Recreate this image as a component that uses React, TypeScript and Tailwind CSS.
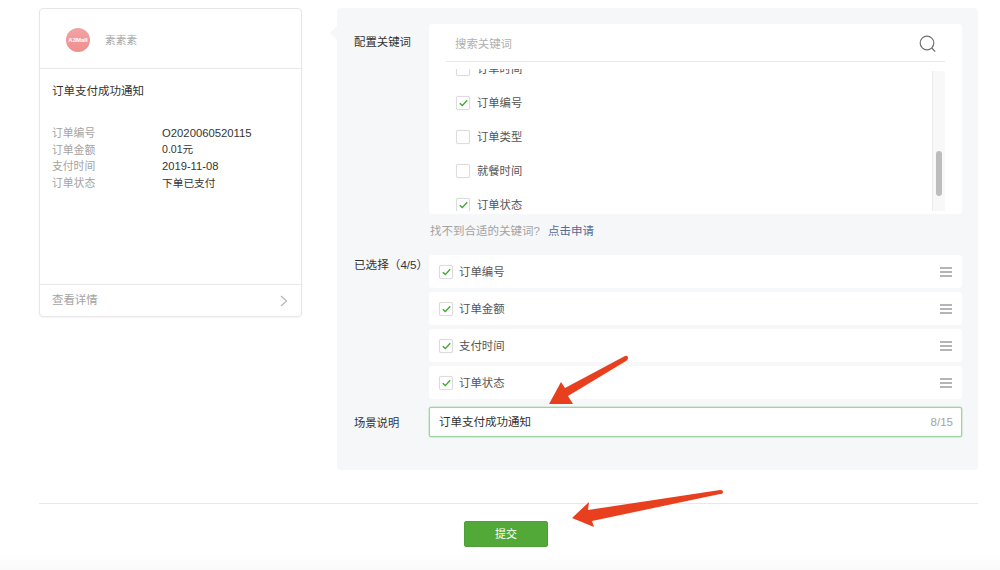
const FONT = "font-['Liberation_Sans','Noto_Sans_CJK_SC',sans-serif]"

const details = [
  { label: '订单编号', value: 'O2020060520115', size: 'text-[11.3px]' },
  { label: '订单金额', value: '0.01元', size: 'text-[10.6px]' },
  { label: '支付时间', value: '2019-11-08', size: 'text-[11.2px]' },
  { label: '订单状态', value: '下单已支付', size: 'text-[10.7px]' },
]

const keywords = [
  { name: '订单时间', checked: false },
  { name: '订单编号', checked: true },
  { name: '订单类型', checked: false },
  { name: '就餐时间', checked: false },
  { name: '订单状态', checked: true },
]

const selected = ['订单编号', '订单金额', '支付时间', '订单状态']

function Checkbox({ checked }: { checked: boolean }) {
  return (
    <span className="flex h-[14px] w-[14px] shrink-0 items-center justify-center rounded-[2px] border border-[#dcdcdc] bg-white shadow-[0_0_1px_rgba(0,0,0,0.12)]">
      {checked && (
        <svg width="9" height="8" viewBox="0 0 9 8" fill="none">
          <path d="M0.8 4.2 L3.3 6.6 L8.2 1.2" stroke="#3fa62f" strokeWidth="1.4" />
        </svg>
      )}
    </span>
  )
}

function PreviewCard() {
  return (
    <div className="flex h-[309px] w-[263px] shrink-0 flex-col rounded-[4px] border border-[#e6e6e6] bg-white shadow-[0_1px_2px_rgba(0,0,0,0.04)]">
      <div className="flex h-[60px] items-center border-b border-[#e8e8e8] pl-[26px] pt-[3px]">
        <div className="flex h-[24px] w-[24px] items-center justify-center overflow-hidden rounded-full bg-gradient-to-b from-[#f2a3a3] to-[#ee8f8f] text-[6px] font-bold text-white">
          A3Mall
        </div>
        <span className="ml-[15px] text-[10.7px] text-[#a8a8a8]">素素素</span>
      </div>
      <div className="flex-1 px-[12px]">
        <div className="mt-[14px] text-[11.5px] leading-[17px] text-[#333333]">订单支付成功通知</div>
        <div className="mt-[25px]">
          {details.map((d) => (
            <div key={d.label} className="flex h-[16.5px] items-center text-[10.8px]">
              <span className="w-[110px] text-[#a3a3a3]">{d.label}</span>
              <span className={`${d.size} text-[#353535]`}>{d.value}</span>
            </div>
          ))}
        </div>
      </div>
      <div className="flex h-[32px] items-center justify-between border-t border-[#e8e8e8] pl-[12px] pr-[13px] text-[11.4px] text-[#a3a3a3]">
        <span>查看详情</span>
        <svg width="8" height="12" viewBox="0 0 8 12" fill="none">
          <path d="M1 1 L6.5 6 L1 11" stroke="#b5b5b5" strokeWidth="1.2" />
        </svg>
      </div>
    </div>
  )
}

function KeywordBox() {
  return (
    <div className="h-[190px] w-[533px] rounded-[3px] bg-white px-[17px] pt-[1px]">
      <div className="flex h-[37px] items-center justify-between border-b border-[#e8e8e8] pl-[9px] pr-[8px]">
        <span className="pt-[4px] text-[11.4px] text-[#b0b0b0]">搜索关键词</span>
        <svg width="18" height="18" viewBox="0 0 18 18" fill="none" className="mt-[2px]">
          <circle cx="8" cy="8" r="6.8" stroke="#707070" strokeWidth="1.2" />
          <path d="M12.8 13 L16.2 16.6" stroke="#707070" strokeWidth="1.3" />
        </svg>
      </div>
      <div className="relative mt-[7px] h-[142px] overflow-hidden">
        <div className="-mt-[17px] pl-[10px]">
          {keywords.map((k) => (
            <div key={k.name} className="flex h-[34px] items-center gap-[7px] text-[11.3px] text-[#555555]">
              <Checkbox checked={k.checked} />
              <span>{k.name}</span>
            </div>
          ))}
        </div>
        <div className="absolute right-0 top-[2px] h-[140px] w-[13px] border-l border-[#ececec] bg-[#f8f8f8]">
          <div className="ml-[3px] mt-[80px] h-[45px] w-[6px] rounded-[3px] bg-[#bdbdbd]" />
        </div>
      </div>
    </div>
  )
}

export default function App() {
  return (
    <div className={`relative h-[570px] w-[1000px] overflow-hidden bg-white ${FONT}`}>
      <div className="flex h-[503px] items-start gap-[35px] pl-[39px] pt-[8px]">
        <PreviewCard />

        <div className="relative h-[462px] w-[641px] rounded-[4px] bg-[#f6f7f9] pl-[17px] pt-[16px]">
          <div className="absolute -left-[5px] top-[20px] h-[10px] w-[10px] rotate-45 bg-[#f6f7f9]" />

          <div className="flex">
            <div className="w-[75px] pt-[10px] text-[11.4px] leading-[16px] text-[#333333]">配置关键词</div>
            <KeywordBox />
          </div>

          <div className="ml-[76px] mt-[9px] h-[16px] text-[11.5px] leading-[17px] text-[#a3a3a3]">
            找不到合适的关键词?
            <span className="ml-[8px] text-[#576b95]">点击申请</span>
          </div>

          <div className="mt-[16px] flex">
            <div className="w-[75px] pt-[2px] text-[11.6px] leading-[16px] text-[#333333]">已选择（4/5）</div>
            <div className="flex flex-col gap-[4px]">
              {selected.map((s) => (
                <div key={s} className="flex h-[33px] w-[533px] items-center rounded-[3px] bg-white pl-[10px] pr-[10px] text-[11.4px] text-[#555555]">
                  <Checkbox checked />
                  <span className="ml-[6px] flex-1 pt-[2px]">{s}</span>
                  <span className="flex w-[12px] flex-col gap-[2px]">
                    <span className="h-[2px] bg-[#b5b5b5]" />
                    <span className="h-[2px] bg-[#b5b5b5]" />
                    <span className="h-[2px] bg-[#b5b5b5]" />
                  </span>
                </div>
              ))}
            </div>
          </div>

          <div className="mt-[8px] flex items-center">
            <div className="w-[75px] pt-[2px] text-[11.3px] text-[#333333]">场景说明</div>
            <div className="flex h-[30px] w-[533px] items-center justify-between rounded-[2px] border border-[#9ad6a2] bg-white pl-[9px] pr-[8px] shadow-[0_0_0_0.5px_#b5e2ba]">
              <span className="pt-[2px] text-[11.5px] text-[#333333]">订单支付成功通知</span>
              <span className="pt-[1px] text-[11.5px] text-[#a3a3a3]">8/15</span>
            </div>
          </div>
        </div>
      </div>

      <div className="ml-[39px] h-[18px] w-[939px] border-t border-[#e8e8e8]" />

      <div className="flex justify-center">
        <button className="ml-[12px] h-[26px] w-[84px] rounded-[2px] border border-[#4f9e37] bg-[#53a938] text-[11px] text-white">
          提交
        </button>
      </div>

      <div className="absolute inset-x-0 bottom-0 h-[16px] bg-gradient-to-b from-white to-[#fafafa]" />

      {/* annotation arrows */}
      <svg className="absolute left-0 top-0" width="1000" height="570" viewBox="0 0 1000 570" fill="#e8401f">
        <path d="M549 404 L561 382 L565 388 L625 356 Q628 355 628 358 Q628 360 626 361 L568 396 L573 404 Z" />
        <path d="M572 518 L589 502 L588 510 L720 490 Q723 490 723 492 Q723 494 720 494 L592 521 L594 527 Z" />
      </svg>
    </div>
  )
}
